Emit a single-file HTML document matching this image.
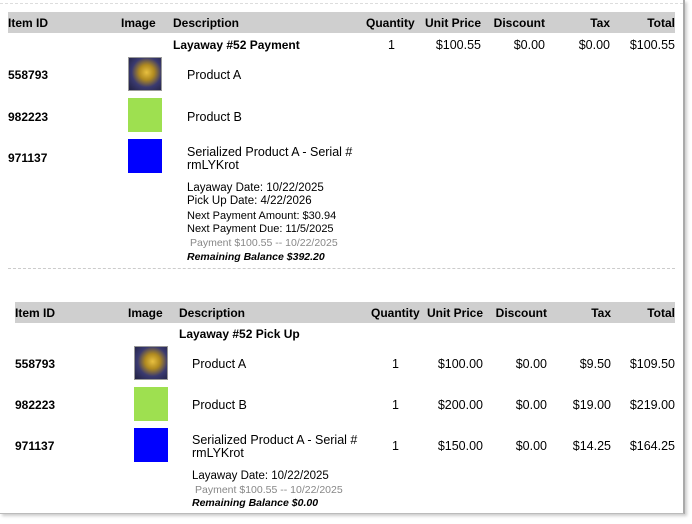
<!DOCTYPE html>
<html><head><style>
body{margin:0;width:692px;height:524px;background:#fff;position:relative;overflow:hidden;font-family:"Liberation Sans",sans-serif;color:#000}
.a{position:absolute;white-space:nowrap;font-size:12.5px;line-height:14px}
.b{font-weight:bold;font-size:12px}
.r{text-align:right}
.hd{position:absolute;background:#cfcfcf;height:21px}
.img{position:absolute;width:34px;height:34px}
.s{font-size:11px}
.g{color:#888}
</style></head><body>
<div style="position:absolute;left:0;top:0;width:683px;height:513px;border-right:2px solid #aaa;border-bottom:1px solid #bbb;box-shadow:2px 2px 3px #ccc"></div>
<div style="position:absolute;left:0;top:3px;width:683px;border-top:1px dashed #ddd"></div>

<div class="hd" style="left:8px;top:12px;width:667px"></div>
<div class="a b" style="left:8px;top:16px">Item ID</div>
<div class="a b" style="left:121px;top:16px">Image</div>
<div class="a b" style="left:173px;top:16px">Description</div>
<div class="a b" style="left:366px;top:16px">Quantity</div>
<div class="a b r" style="right:211px;top:16px">Unit Price</div>
<div class="a b r" style="right:147px;top:16px">Discount</div>
<div class="a b r" style="right:82px;top:16px">Tax</div>
<div class="a b r" style="right:17px;top:16px">Total</div>

<div class="a b" style="left:173px;top:38px">Layaway #52 Payment</div>
<div class="a" style="left:388px;top:38px">1</div>
<div class="a r" style="right:211px;top:38px">$100.55</div>
<div class="a r" style="right:147px;top:38px">$0.00</div>
<div class="a r" style="right:82px;top:38px">$0.00</div>
<div class="a r" style="right:17px;top:38px">$100.55</div>

<div class="a b" style="left:8px;top:68px">558793</div>
<div class="img" style="left:128px;top:57px;background:radial-gradient(circle at 55% 45%,#e8c040 0,#b08a20 30%,#3a3a70 60%,#202040 100%);border:1px solid #999;box-sizing:border-box"></div>
<div class="a" style="left:187px;top:68px">Product A</div>
<div class="a b" style="left:8px;top:110px">982223</div>
<div class="img" style="left:128px;top:98px;background:#9ee050"></div>
<div class="a" style="left:187px;top:110px">Product B</div>
<div class="a b" style="left:8px;top:151px">971137</div>
<div class="img" style="left:128px;top:139px;background:#0000ff"></div>
<div class="a" style="left:187px;top:145px">Serialized Product A - Serial #</div>
<div class="a" style="left:187px;top:158px">rmLYKrot</div>
<div class="a" style="left:187px;top:181px;font-size:11.5px">Layaway Date: 10/22/2025</div>
<div class="a" style="left:187px;top:194px;font-size:11.5px">Pick Up Date: 4/22/2026</div>
<div class="a s" style="left:187px;top:209px">Next Payment Amount: $30.94</div>
<div class="a s" style="left:187px;top:222px">Next Payment Due: 11/5/2025</div>
<div class="a s g" style="left:190px;top:236px;font-size:10.5px">Payment $100.55 -- 10/22/2025</div>
<div class="a s b" style="left:187px;top:250px;font-style:italic;font-size:10.5px">Remaining Balance $392.20</div>
<div style="position:absolute;left:8px;top:268px;width:667px;border-top:1px dashed #ccc"></div>

<div class="hd" style="left:15px;top:302px;width:660px"></div>
<div class="a b" style="left:15px;top:306px">Item ID</div>
<div class="a b" style="left:128px;top:306px">Image</div>
<div class="a b" style="left:179px;top:306px">Description</div>
<div class="a b" style="left:371px;top:306px">Quantity</div>
<div class="a b r" style="right:209px;top:306px">Unit Price</div>
<div class="a b r" style="right:145px;top:306px">Discount</div>
<div class="a b r" style="right:81px;top:306px">Tax</div>
<div class="a b r" style="right:17px;top:306px">Total</div>

<div class="a b" style="left:179px;top:327px">Layaway #52 Pick Up</div>
<div class="a b" style="left:15px;top:357px">558793</div>
<div class="img" style="left:134px;top:346px;background:radial-gradient(circle at 55% 45%,#e8c040 0,#b08a20 30%,#3a3a70 60%,#202040 100%);border:1px solid #999;box-sizing:border-box"></div>
<div class="a" style="left:192px;top:357px">Product A</div>
<div class="a b" style="left:15px;top:398px">982223</div>
<div class="img" style="left:134px;top:387px;background:#9ee050"></div>
<div class="a" style="left:192px;top:398px">Product B</div>
<div class="a b" style="left:15px;top:439px">971137</div>
<div class="img" style="left:134px;top:428px;background:#0000ff"></div>
<div class="a" style="left:192px;top:433px">Serialized Product A - Serial #</div>
<div class="a" style="left:192px;top:446px">rmLYKrot</div>

<div class="a" style="left:392px;top:357px">1</div>
<div class="a r" style="right:209px;top:357px">$100.00</div>
<div class="a r" style="right:145px;top:357px">$0.00</div>
<div class="a r" style="right:81px;top:357px">$9.50</div>
<div class="a r" style="right:17px;top:357px">$109.50</div>
<div class="a" style="left:392px;top:398px">1</div>
<div class="a r" style="right:209px;top:398px">$200.00</div>
<div class="a r" style="right:145px;top:398px">$0.00</div>
<div class="a r" style="right:81px;top:398px">$19.00</div>
<div class="a r" style="right:17px;top:398px">$219.00</div>
<div class="a" style="left:392px;top:439px">1</div>
<div class="a r" style="right:209px;top:439px">$150.00</div>
<div class="a r" style="right:145px;top:439px">$0.00</div>
<div class="a r" style="right:81px;top:439px">$14.25</div>
<div class="a r" style="right:17px;top:439px">$164.25</div>

<div class="a" style="left:192px;top:469px;font-size:11.5px">Layaway Date: 10/22/2025</div>
<div class="a s g" style="left:195px;top:483px;font-size:10.5px">Payment $100.55 -- 10/22/2025</div>
<div class="a s b" style="left:192px;top:496px;font-style:italic;font-size:10.5px">Remaining Balance $0.00</div>
</body></html>
